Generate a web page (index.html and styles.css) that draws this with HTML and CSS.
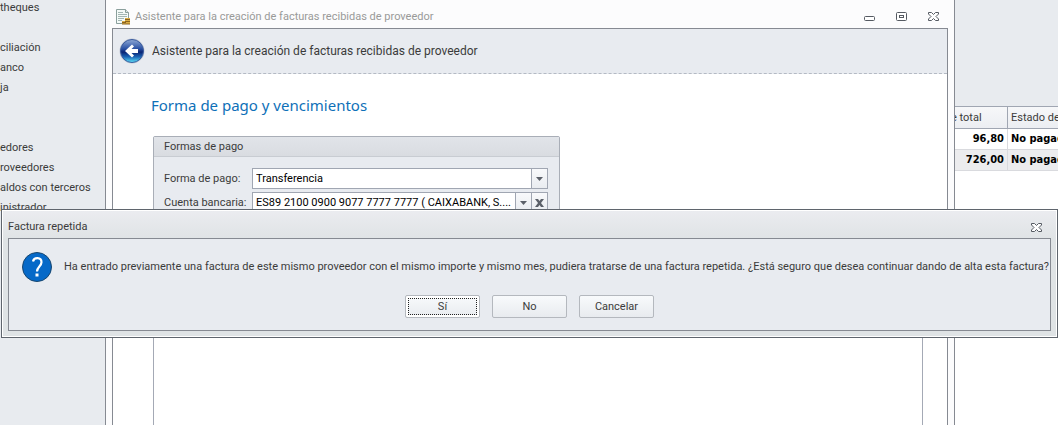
FILE: index.html
```
<!DOCTYPE html>
<html lang="es">
<head>
    <meta charset="UTF-8">
    <title>Factura repetida</title>
    <link rel="stylesheet" href="styles.css">
</head>
<body>
    <div class="desktop">
        <nav class="sidebar">
            <ul>
                <li><a href="#">theques</a></li>
            </ul>
            <ul>
                <li><a href="#">ciliación</a></li>
                <li><a href="#">anco</a></li>
                <li><a href="#">ja</a></li>
            </ul>
            <ul class="last">
                <li><a href="#">edores</a></li>
                <li><a href="#">roveedores</a></li>
                <li><a href="#">aldos con terceros</a></li>
                <li><a href="#">inistrador</a></li>
            </ul>
        </nav>

        <main class="invoices">
            <table>
                <thead>
                    <tr><th class="amount">e total</th><th>Estado de</th></tr>
                </thead>
                <tbody>
                    <tr><td class="amount">96,80</td><td>No pagad</td></tr>
                    <tr><td class="amount">726,00</td><td>No pagad</td></tr>
                </tbody>
            </table>
        </main>

        <!-- Asistente -->
        <section class="wizard">
            <header class="wizard-title">
                <svg width="16" height="17" viewBox="0 0 16 17">
                    <path d="M1.500 1.500h9l3 3v11h-12z" fill="#f4faf8" stroke="#8a9f9c"/>
                    <path d="M10.500 1.500v3h3" fill="#dce8e5" stroke="#8a9f9c"/>
                    <path d="M3 4.500h5M3 6.500h9M3 8.500h9M3 10.500h6M3 12.500h4" stroke="#a3b6b3"/>
                    <path d="M10 10h5v6h-5zM7 13h5v3H7z" fill="#dcae45"/>
                    <path d="M10 11.500h5M10 13.500h5M7 14.500h4M7 16h8" stroke="#8c6420"/>
                </svg>
                <span>Asistente para la creación de facturas recibidas de proveedor</span>
                <div class="window-buttons">
                    <button aria-label="Minimizar"><svg width="11" height="11"><rect x=".5" y="5.500" width="10" height="4" rx="1"/></svg></button>
                    <button aria-label="Maximizar"><svg width="11" height="11"><rect x=".5" y="1.500" width="10" height="8" rx="1"/><rect x="3.500" y="4.500" width="4" height="2"/></svg></button>
                    <button aria-label="Cerrar"><svg width="11" height="11"><path d="M.5 1.500h3l2 2 2-2h3v1.500L8 5.500 10.500 8v1.500h-3l-2-2-2 2h-3V8L3 5.500.5 3z"/></svg></button>
                </div>
            </header>

            <div class="wizard-page">
                <div class="wizard-bar">
                    <button aria-label="Atrás">
                        <svg width="26" height="26" viewBox="0 0 26 26">
                            <defs>
                                <linearGradient id="ball" x1="0" y1="0" x2="0" y2="1">
                                    <stop offset="0" stop-color="#8fa9d6"/>
                                    <stop offset=".4" stop-color="#2a51a4"/>
                                    <stop offset=".55" stop-color="#0a2474"/>
                                    <stop offset=".75" stop-color="#1a63b4"/>
                                    <stop offset="1" stop-color="#5fe4fa"/>
                                </linearGradient>
                            </defs>
                            <circle cx="13" cy="13" r="12.500" fill="#c3cad6"/>
                            <circle cx="13" cy="13" r="11.500" fill="url(#ball)" stroke="#3c5c9e"/>
                            <path d="M6 13l7-6.500 2 2-2.500 2.500H19v4h-6.500l2.500 2.500-2 2z" fill="#fff"/>
                        </svg>
                    </button>
                    <span>Asistente para la creación de facturas recibidas de proveedor</span>
                </div>

                <div class="wizard-body">
                    <h1>Forma de pago y vencimientos</h1>
                    <fieldset class="payment">
                        <legend>Formas de pago</legend>
                        <div class="field">
                            <label for="method">Forma de pago:</label>
                            <div class="combo">
                                <input id="method" type="text" value="Transferencia">
                                <button aria-label="Abrir"><svg width="7" height="4"><path d="M0 0h7L3.500 4z"/></svg></button>
                            </div>
                        </div>
                        <div class="field">
                            <label for="account">Cuenta bancaria:</label>
                            <div class="combo">
                                <input id="account" type="text" value="ES89 2100 0900 9077 7777 7777 ( CAIXABANK, S....">
                                <button aria-label="Abrir"><svg width="7" height="4"><path d="M0 0h7L3.500 4z"/></svg></button>
                                <button aria-label="Borrar"><svg width="9" height="8"><path d="M0 0h3l1.500 2L6 0h3L6 4l3 4H6L4.500 6 3 8H0l3-4z"/></svg></button>
                            </div>
                        </div>
                    </fieldset>
                    <div class="due-dates"></div>
                </div>
            </div>
        </section>

        <!-- Aviso -->
        <div class="dialog" role="dialog" aria-labelledby="dialog-title">
            <header class="dialog-title">
                <span id="dialog-title">Factura repetida</span>
                <button aria-label="Cerrar"><svg width="11" height="11"><path d="M.5 1.500h3l2 2 2-2h3v1.500L8 5.500 10.500 8v1.500h-3l-2-2-2 2h-3V8L3 5.500.5 3z"/></svg></button>
            </header>
            <div class="dialog-body">
                <div class="message">
                    <svg width="32" height="32" viewBox="0 0 32 32">
                        <circle cx="16" cy="16" r="14.500" fill="#0669c8" stroke="#17466f"/>
                        <path d="M12 10.500C13 6 20.500 6 20.500 11.200c0 4-4.500 4.600-4.500 9.300" fill="none" stroke="#fff" stroke-width="2.200"/>
                        <rect x="14.500" y="22.500" width="3" height="3" fill="#fff"/>
                    </svg>
                    <p>Ha entrado previamente una factura de este mismo proveedor con el mismo importe y mismo mes, pudiera tratarse de una factura repetida. ¿Está seguro que desea continuar dando de alta esta factura?</p>
                </div>
                <div class="actions">
                    <button class="default">Sí</button>
                    <button>No</button>
                    <button>Cancelar</button>
                </div>
            </div>
        </div>
    </div>
</body>
</html>
```
FILE: styles.css
```
* {
    box-sizing: border-box;
}

body {
    margin: 0;
    background: #fff;
    color: #3b3b3b;
    font-family: Roboto, sans-serif;
    font-size: 11px;
    line-height: 20px;
}

button, input {
    font: inherit;
    color: inherit;
    padding: 0;
    border: none;
    background: none;
}

svg {
    display: block;
}

.desktop {
    position: relative;
    display: flex;
    height: 100vh;
    overflow: hidden;
}

/* Menú lateral */
.sidebar {
    width: 106px;
    background: #e8ebef;
}

.sidebar ul {
    list-style: none;
    margin: 0 0 20px;
    padding: 0;
}

.sidebar ul:first-child {
    margin-top: -2px;
}

.sidebar ul.last {
    margin-top: 40px;
}

.sidebar a {
    color: inherit;
    text-decoration: none;
    white-space: nowrap;
}

/* Listado de facturas */
.invoices {
    flex: 1;
    display: flex;
    flex-direction: column;
    align-items: flex-end;
}

.invoices::before {
    content: "";
    width: 100%;
    height: 106px;
    background: #e8ebef;
}

.invoices table {
    border-collapse: separate;
    border-spacing: 0;
    table-layout: fixed;
    width: 110px;
}

.invoices th {
    height: 23px;
    padding: 0 3px;
    border: 1px solid #a0a6b2;
    border-left: none;
    background: linear-gradient(#f6f7f9, #eceef2);
    font-weight: normal;
    text-align: left;
    white-space: nowrap;
}

.invoices td {
    height: 21px;
    padding: 0 3px;
    border-bottom: 1px solid #d9dade;
    border-right: 1px solid #d9dade;
    color: #000;
    font-family: "DejaVu Sans Condensed", sans-serif;
    font-weight: bold;
    line-height: 18px;
    white-space: nowrap;
}

.invoices th:last-child,
.invoices td:last-child {
    border-right: none;
}

.invoices tr:nth-child(even) td {
    background: #ececee;
}

.invoices .amount {
    width: 60px;
}

.invoices td.amount {
    text-align: right;
}

/* Asistente */
.wizard {
    position: absolute;
    top: 0;
    bottom: 0;
    left: 105px;
    right: 103px;
    display: flex;
    flex-direction: column;
    padding: 0 6px;
    border: 1px solid #868a92;
    border-width: 0 1px;
    background: #fcfcfd;
}

.wizard-title {
    display: flex;
    align-items: center;
    gap: 4px;
    height: 28px;
    padding: 5px 9px 0 3px;
    color: #999a99;
}

.window-buttons {
    display: flex;
    gap: 21px;
    margin-left: auto;
}

.window-buttons svg,
.dialog-title svg {
    fill: #fff;
    stroke: #555a62;
}

.wizard-page {
    flex: 1;
    display: flex;
    flex-direction: column;
    border: 1px solid #868a92;
    border-bottom: none;
    background: #fff;
}

.wizard-bar {
    display: flex;
    align-items: center;
    gap: 7px;
    height: 45px;
    padding-left: 6px;
    border-bottom: 1px dashed #b4bac4;
    background: #e8ebf0;
    font-size: 12px;
}

.wizard-body {
    flex: 1;
    display: flex;
    flex-direction: column;
    padding: 19px 24px 0 40px;
}

.wizard-body h1 {
    margin: 0 0 19px -2px;
    color: #0e70b8;
    font-family: "Noto Sans", sans-serif;
    font-size: 15px;
    font-weight: normal;
    line-height: 24px;
}

.payment {
    display: flex;
    flex-direction: column;
    gap: 3px;
    width: 407px;
    margin: 0;
    padding: 0 0 11px;
    border: 1px solid #a9aeb7;
    border-radius: 2px;
    background: #e8ebf0;
}

.payment legend {
    float: left;
    width: 100%;
    height: 20px;
    margin-bottom: 8px;
    padding: 0 10px;
    border-bottom: 1px solid #c8ccd2;
    background: linear-gradient(#e1e4e9, #d9dce1);
}

.field {
    display: flex;
    align-items: center;
    padding: 0 11px 0 10px;
}

.field label {
    width: 88px;
    white-space: nowrap;
}

.combo {
    flex: 1;
    display: flex;
    height: 21px;
    border: 1px solid #a0a6b2;
    background: #fff;
    color: #000;
}

.combo input {
    flex: 1;
    min-width: 0;
    padding: 0 3px;
}

.combo button {
    display: grid;
    place-items: center;
    width: 16px;
    border-left: 1px solid #a0a6b2;
    background: linear-gradient(#f8f9fb, #e9ecf0);
    fill: #5b6069;
}

/* Vencimientos */
.due-dates {
    flex: 1;
    margin-top: 12px;
    border: 1px solid #a4a9b5;
    border-bottom: none;
}

/* Aviso */
.dialog {
    position: absolute;
    top: 209px;
    left: 1px;
    right: 0;
    padding: 0 6px 6px;
    border: 1px solid #5f656d;
    background: linear-gradient(#ebecf0, #dfe3e5 30px);
    box-shadow: inset 0 0 0 1px #fff;
}

.dialog-title {
    display: flex;
    align-items: center;
    justify-content: space-between;
    height: 28px;
    padding: 6px 9px 0 0;
}

.dialog-body {
    padding: 12px;
    border: 1px solid #868a92;
    background: #e8ebf0;
}

.message {
    display: flex;
    align-items: center;
    gap: 11px;
}

.message svg {
    flex: none;
}

.message p {
    margin: 0;
    white-space: nowrap;
}

.actions {
    display: flex;
    justify-content: center;
    gap: 12px;
    margin-top: 12px;
}

.actions button {
    width: 75px;
    height: 23px;
    border: 1px solid #b4b8be;
    border-radius: 2px;
    background: linear-gradient(#f8fafc, #e8ebef);
}

.actions .default {
    outline: 1px dotted #222;
    outline-offset: -4px;
    box-shadow: inset 0 0 0 2px #fff;
}
```
